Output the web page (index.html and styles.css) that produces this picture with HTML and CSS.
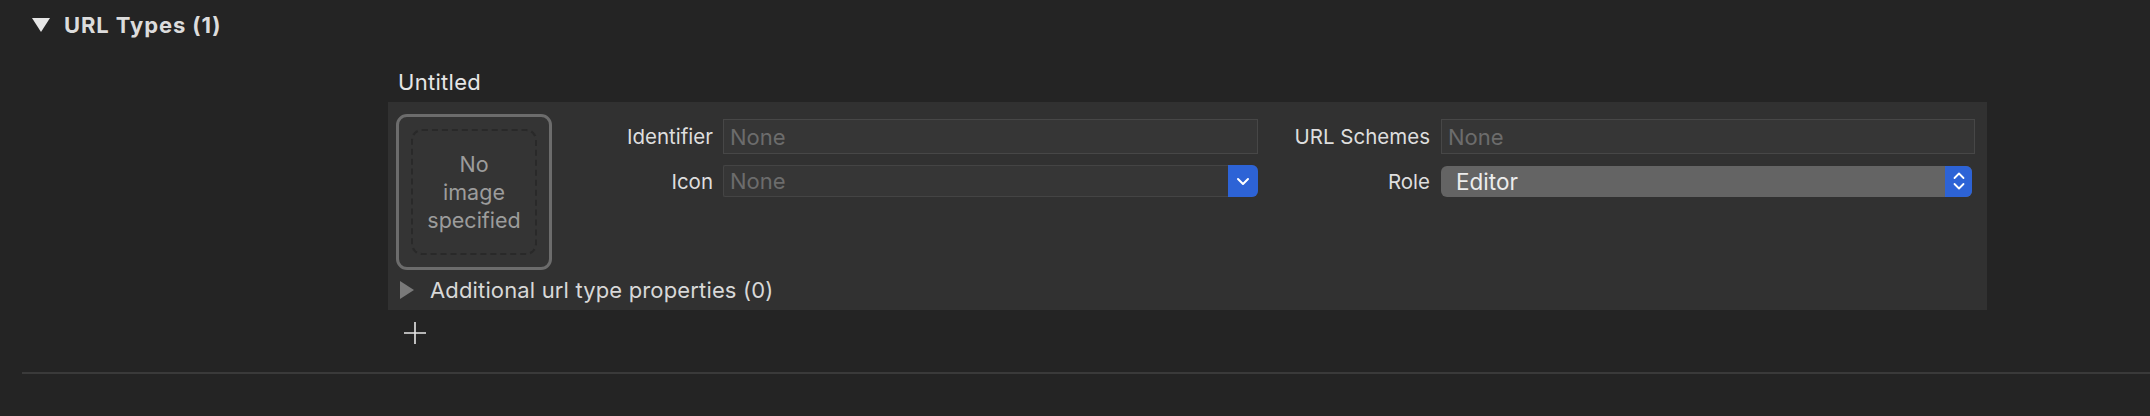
FILE: index.html
```html
<!DOCTYPE html>
<html>
<head>
<meta charset="utf-8">
<link rel="stylesheet" href="styles.css">
</head>
<body>
<div class="page">
  <div class="section-header">
    <svg class="disc-open" width="18" height="14" viewBox="0 0 18 14"><path d="M0 0 H18 L9 14 Z" fill="#e6e6e6"/></svg>
    <span class="section-title">URL Types (1)</span>
  </div>
  <div class="section-body">
    <div class="item-title">Untitled</div>
    <div class="item-panel">
      <div class="item-main">
        <div class="image-well">
          <div class="well-inner">No<br>image<br>specified</div>
        </div>
        <div class="form-grid">
          <div class="label">Identifier</div>
          <div class="field"><span class="placeholder">None</span></div>
          <div class="label label-2">URL Schemes</div>
          <div class="field"><span class="placeholder">None</span></div>

          <div class="label">Icon</div>
          <div class="combo">
            <span class="placeholder">None</span>
            <span class="combo-btn">
              <svg width="14" height="9" viewBox="0 0 14 9"><path d="M2 2 L7 7 L12 2" fill="none" stroke="#fff" stroke-width="2" stroke-linecap="round" stroke-linejoin="round"/></svg>
            </span>
          </div>
          <div class="label label-2">Role</div>
          <div class="popup">
            <span class="popup-value">Editor</span>
            <span class="popup-btn">
              <svg width="14" height="22" viewBox="0 0 14 22"><path d="M2.5 8 L7 3.5 L11.5 8" fill="none" stroke="#fff" stroke-width="1.8" stroke-linecap="round" stroke-linejoin="round"/><path d="M2.5 14 L7 18.5 L11.5 14" fill="none" stroke="#fff" stroke-width="1.8" stroke-linecap="round" stroke-linejoin="round"/></svg>
            </span>
          </div>
        </div>
      </div>
      <div class="additional">
        <svg class="disc-closed" width="14" height="18" viewBox="0 0 14 18"><path d="M0 0 L14 9 L0 18 Z" fill="#7a7a7a"/></svg>
        <span class="additional-text">Additional url type properties (0)</span>
      </div>
    </div>
    <div class="add-row">
      <svg width="22" height="22" viewBox="0 0 22 22"><path d="M11 0 V22 M0 11 H22" stroke="#e6e6e6" stroke-width="1.6"/></svg>
    </div>
  </div>
  <div class="separator"></div>
</div>
</body>
</html>
```
FILE: styles.css
```css
html, body {
  margin: 0;
  padding: 0;
  background: #242424;
}
body {
  width: 2150px;
  height: 416px;
  overflow: hidden;
  font-family: Inter, "Noto Sans", "Liberation Sans", sans-serif;
  color: #e2e2e2;
}
.page {
  display: flex;
  flex-direction: column;
}
.section-header {
  height: 50px;
  display: flex;
  align-items: center;
  padding-left: 32px;
  gap: 14px;
}
.section-title {
  font-size: 22px;
  font-weight: 700;
  letter-spacing: 0.9px;
  color: #dcdcdc;
  line-height: 24px;
}
.section-body {
  padding-left: 388px;
  padding-right: 163px;
}
.item-title {
  padding: 20px 0 0 10px;
  line-height: 24px;
  height: 24px;
  margin-bottom: 8px;
  font-size: 22px;
  letter-spacing: 0.3px;
  color: #e6e6e6;
}
.item-panel {
  background: #313131;
  padding: 12px 12px 0 8px;
}
.item-main {
  display: flex;
  align-items: flex-start;
}
.image-well {
  border: 3px solid #6c6c6c;
  border-radius: 11px;
  padding: 12px;
  box-sizing: content-box;
  width: 126px;
  height: 126px;
  background: #343434;
}
.well-inner {
  width: 100%;
  height: 100%;
  box-sizing: border-box;
  border: 2px dashed #292929;
  border-radius: 11px;
  display: flex;
  align-items: center;
  justify-content: center;
  text-align: center;
  font-size: 21.5px;
  line-height: 28px;
  color: #9c9c9c;
}
.form-grid {
  margin-top: 5px;
  display: grid;
  grid-template-columns: 171px 535px 183px 534px;
  grid-template-rows: 35px 32px;
  row-gap: 11px;
  align-items: center;
}
.label {
  text-align: right;
  padding-right: 10px;
  font-size: 20.5px;
  color: #dedede;
}
.label-2 {
  padding-right: 11px;
}
.field {
  height: 35px;
  box-sizing: border-box;
  border: 1px solid #474747;
  background: #363636;
  display: flex;
  align-items: center;
  padding-left: 6px;
}
.placeholder {
  font-size: 22px;
  color: #6c6c6c;
}
.combo {
  height: 32px;
  box-sizing: border-box;
  border: 1px solid #444444;
  border-right: none;
  background: #363636;
  display: flex;
  align-items: center;
  padding-left: 6px;
  border-radius: 2px 6px 6px 2px;
}
.combo .placeholder {
  flex: 1;
}
.combo-btn {
  width: 30px;
  height: 32px;
  margin-top: -1px;
  margin-bottom: -1px;
  background: #2d63d6;
  border-radius: 0 6px 6px 0;
  display: flex;
  align-items: center;
  justify-content: center;
}
.popup {
  height: 31px;
  width: 531px;
  background: #646464;
  border-radius: 6px;
  display: flex;
  align-items: center;
  overflow: hidden;
}
.popup-value {
  flex: 1;
  padding-left: 15px;
  font-size: 22.5px;
  color: #ececec;
}
.popup-btn {
  width: 27px;
  height: 31px;
  background: #2d63d6;
  display: flex;
  align-items: center;
  justify-content: center;
}
.additional {
  height: 40px;
  display: flex;
  align-items: center;
  padding-left: 4px;
  gap: 16px;
}
.additional-text {
  font-size: 22px;
  letter-spacing: 0.15px;
  color: #d8d8d8;
}
.add-row {
  height: 62px;
  padding-left: 16px;
  padding-top: 12px;
  box-sizing: border-box;
}
.add-row svg {
  display: block;
}
.separator {
  margin-left: 22px;
  height: 2px;
  background: #3a3a3a;
}
```
